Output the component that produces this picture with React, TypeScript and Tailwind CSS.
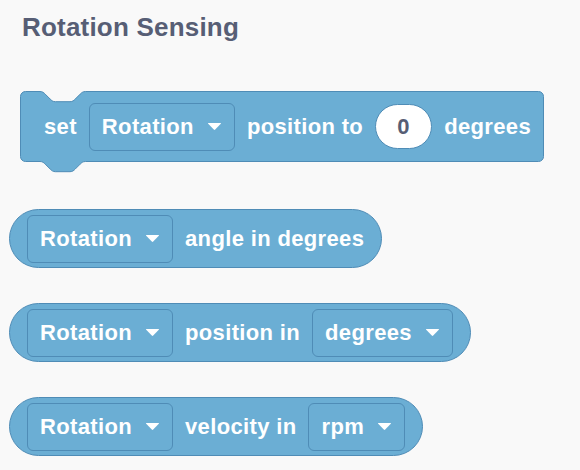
import React from "react";

const font = { fontFamily: '"Liberation Sans", Arial, Helvetica, sans-serif' };

function Caret() {
  return (
    <svg width="15" height="9" viewBox="0 0 15 9" className="shrink-0">
      <path d="M1.5 1 L13.5 1 Q14.5 1 13.8 1.8 L8.2 7.6 Q7.5 8.3 6.8 7.6 L1.2 1.8 Q0.5 1 1.5 1 Z" fill="#ffffff" />
    </svg>
  );
}

function Dropdown({ label }: { label: string }) {
  return (
    <div className="flex h-[48px] shrink-0 items-center gap-[13px] rounded-[6px] border border-[#4f8cb6] bg-[#6baed4] pl-[12px] pr-[12px]">
      <span>{label}</span>
      <Caret />
    </div>
  );
}

function Pill({ children }: { children: React.ReactNode }) {
  return (
    <div className="flex h-[59px] w-fit items-center gap-3 whitespace-nowrap rounded-full border border-[#4f8cb6] bg-[#6baed4] pl-[17px] pr-[17px] text-[22px] font-bold tracking-[0.35px] text-white">
      {children}
    </div>
  );
}

function SetBlock() {
  return (
    <div className="relative ml-[20px] h-[71px] w-[524px] whitespace-nowrap text-[22px] font-bold tracking-[0.35px] text-white">
      <svg className="absolute left-0 top-0 overflow-visible" width="524" height="84">
        <path
          d="M0.5 5.5 A5 5 0 0 1 5.5 0.5 L20 0.5 c2.6 0 3.9 1.3 5.2 2.6 l5 5 c1.3 1.3 2.6 2.6 5.2 2.6 h14.6 c2.6 0 3.9 -1.3 5.2 -2.6 l5 -5 c1.3 -1.3 2.6 -2.6 5.2 -2.6 L518.5 0.5 A5 5 0 0 1 523.5 5.5 L523.5 65.5 A5 5 0 0 1 518.5 70.5 L65.4 70.5 c-2.6 0 -3.9 1.3 -5.2 2.6 l-5 5 c-1.3 1.3 -2.6 2.6 -5.2 2.6 h-14.6 c-2.6 0 -3.9 -1.3 -5.2 -2.6 l-5 -5 c-1.3 -1.3 -2.6 -2.6 -5.2 -2.6 L5.5 70.5 A5 5 0 0 1 0.5 65.5 Z"
          fill="#6baed4"
          stroke="#4f8cb6"
          strokeWidth="1"
        />
      </svg>
      <div className="relative flex h-full items-center gap-3 pl-[24px] pr-[12px]">
        <span>set</span>
        <Dropdown label="Rotation" />
        <span>position to</span>
        <div className="flex h-[45px] w-[57px] shrink-0 items-center justify-center rounded-full border border-[#4f8cb6] bg-white text-[#575e75]">
          0
        </div>
        <span>degrees</span>
      </div>
    </div>
  );
}

export default function App() {
  return (
    <div className="h-[470px] w-[580px] overflow-hidden bg-[#f9f9f9]" style={font}>
      <h1 className="pl-[22px] pt-[12px] text-[26px] font-bold leading-[30px] tracking-[0.2px] text-[#575e75]">
        Rotation Sensing
      </h1>
      <div className="mt-[49px]">
        <SetBlock />
      </div>
      <div className="ml-[9px] mt-[47px] flex flex-col gap-[35px]">
        <Pill>
          <Dropdown label="Rotation" />
          <span>angle in degrees</span>
        </Pill>
        <Pill>
          <Dropdown label="Rotation" />
          <span>position in</span>
          <Dropdown label="degrees" />
        </Pill>
        <Pill>
          <Dropdown label="Rotation" />
          <span>velocity in</span>
          <Dropdown label="rpm" />
        </Pill>
      </div>
    </div>
  );
}
